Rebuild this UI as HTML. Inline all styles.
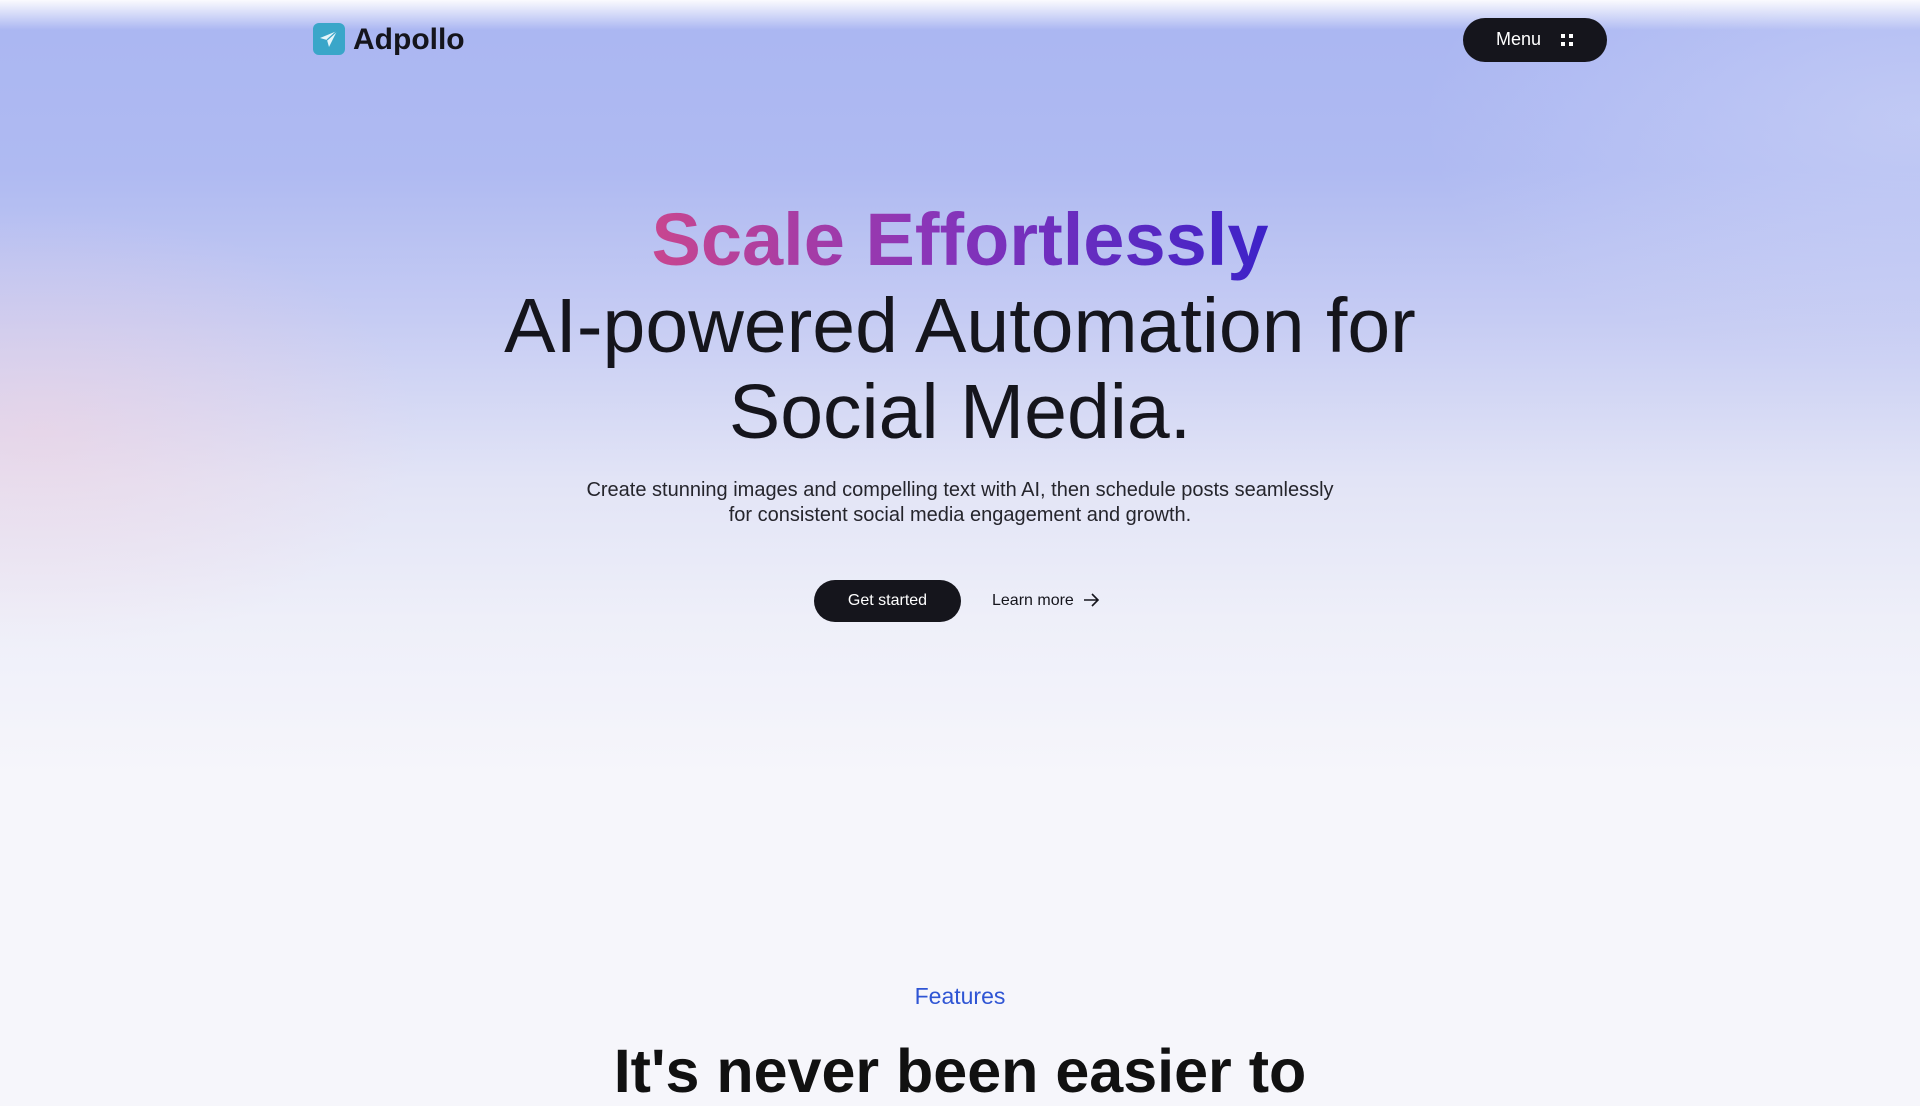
<!DOCTYPE html>
<html><head><meta charset="utf-8"><style>
html,body{margin:0;padding:0}
body{width:1920px;height:1080px;overflow:hidden;position:relative;font-family:"Liberation Sans",sans-serif;color:#15151c;
background:#f6f6fb;}
.bg{position:absolute;inset:0;background:
radial-gradient(ellipse 380px 220px at 40px 430px, rgba(245,205,218,.45), rgba(245,205,218,0) 100%),
linear-gradient(180deg,#aab6f2 0px,#afbaf2 170px,#c6ccf3 320px,#e2e4f6 480px,#eeeff9 620px,#f6f6fb 780px);}
.bg2{position:absolute;left:0;right:0;top:0;height:30px;background:linear-gradient(180deg,#fafafe,rgba(250,250,254,0))}
.bg3{position:absolute;inset:0;background:radial-gradient(ellipse 500px 250px at 1920px 120px,rgba(230,233,250,.35),rgba(240,242,252,0))}
.logo{position:absolute;left:313px;top:23px;width:32px;height:32px;border-radius:6px;background:#3aa6c9}
.brand{position:absolute;left:353px;top:23px;font-size:30px;font-weight:bold;color:#15151c}
.menu{position:absolute;left:1463px;top:18px;width:144px;height:44px;border-radius:22px;background:#15151c;color:#fff;font-size:18px}
.menu span{position:absolute;left:33px;top:11px}
h1{position:absolute;left:0;width:1920px;top:196px;margin:0;text-align:center;font-weight:normal;font-size:77px;line-height:86px}
.g{font-weight:bold;font-size:74px;background:linear-gradient(90deg,#c8468f,#8a35b8 45%,#3d22c8);-webkit-background-clip:text;background-clip:text;color:transparent}
p.sub{position:absolute;left:0;width:1920px;top:478px;margin:0;text-align:center;font-size:20px;line-height:25px;color:#25252c}
.btn{position:absolute;left:814px;top:580px;width:147px;height:42px;border-radius:21px;background:#15151c;color:#fff;font-size:16px;text-align:center;line-height:42px}
.lm{position:absolute;left:992px;top:592px;font-size:16px}
.feat{position:absolute;left:0;width:1920px;top:983px;text-align:center;color:#2f55d4;font-size:23px}
.h2{position:absolute;left:0;width:1920px;top:1036px;text-align:center;font-weight:bold;font-size:61px;color:#111}
</style></head><body>
<div class="bg"></div><div class="bg3"></div><div class="bg2"></div>
<div class="logo"><svg width="32" height="32" viewBox="0 0 32 32"><path d="M24 8 L7 15 L14 17 L16 24 Z" fill="#e6f5fa"/><path d="M24 8 L14 17" stroke="#3aa6c9" stroke-width="1.2"/></svg></div>
<div class="brand">Adpollo</div>
<div class="menu"><span>Menu</span>
<svg style="left:97px;top:15px;position:absolute" width="14" height="14"><rect x="1" y="1" width="4" height="4" fill="#fff"/><rect x="9" y="1" width="4" height="4" fill="#fff"/><rect x="1" y="9" width="4" height="4" fill="#fff"/><rect x="9" y="9" width="4" height="4" fill="#fff"/></svg></div>
<h1><span class="g">Scale Effortlessly</span><br>AI-powered Automation for<br>Social Media.</h1>
<p class="sub">Create stunning images and compelling text with AI, then schedule posts seamlessly<br>for consistent social media engagement and growth.</p>
<div class="btn">Get started</div>
<div class="lm">Learn more <svg width="18" height="14" viewBox="0 0 18 14" style="vertical-align:-2px;margin-left:4px"><path d="M2 7H16M10 1L16 7L10 13" fill="none" stroke="#15151c" stroke-width="1.6"/></svg></div>
<div class="feat">Features</div>
<div class="h2">It's never been easier to</div>
</body></html>
